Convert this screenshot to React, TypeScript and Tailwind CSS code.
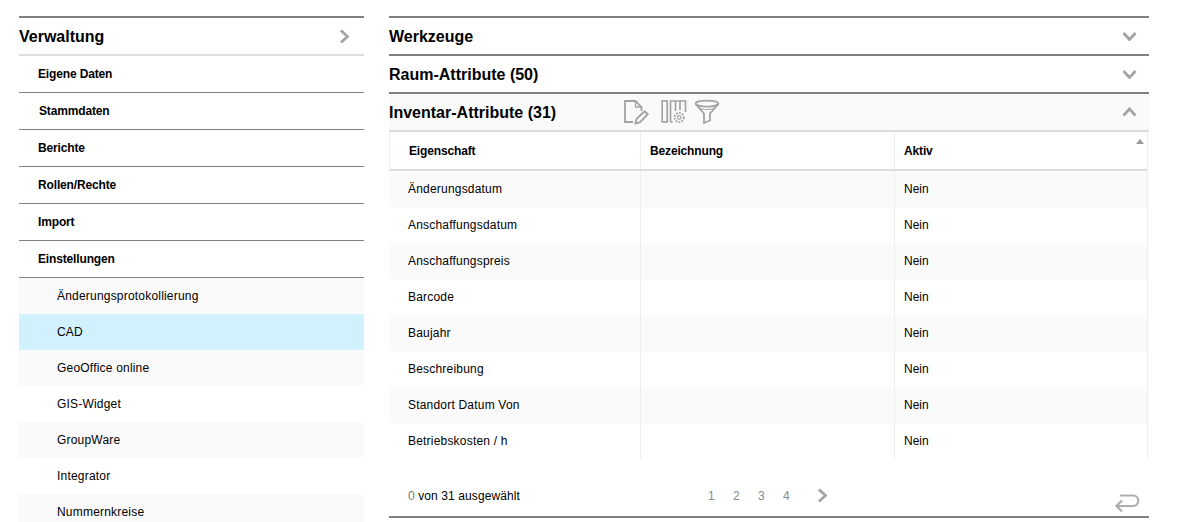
import React from "react";

const Chevron = ({ dir, className }: { dir: "right" | "down" | "up"; className?: string }) => {
  const d = dir === "right" ? "M2 1.5 L8.5 7.5 L2 13.5" : dir === "down" ? "M1.5 2 L7.5 8.5 L13.5 2" : "M1.5 8.5 L7.5 2 L13.5 8.5";
  const w = dir === "right" ? 10 : 15;
  const h = dir === "right" ? 15 : 10;
  return (
    <svg width={w} height={h} viewBox={`0 0 ${w} ${h}`} className={className} fill="none" stroke="#a3a3a3" strokeWidth="2.8">
      <path d={d} />
    </svg>
  );
};

const DocEdit = () => (
  <svg width="26" height="26" viewBox="0 0 26 26" fill="none" stroke="#a3a3a3" strokeWidth="1.8">
    <path d="M10 23 H2 V2 H12.5 L18.5 8 V12" />
    <path d="M12.5 2 V8 H18.5" strokeWidth="1.3" />
    <path d="M12.5 24.5 L13.5 20 L21.5 12.2 L24.8 15.2 L16.8 23.3 Z" strokeWidth="1.9" />
  </svg>
);

const ColumnsGear = () => (
  <svg width="26" height="26" viewBox="0 0 26 26" fill="none" stroke="#a3a3a3" strokeWidth="1.7">
    <rect x="1.2" y="2" width="5" height="21" />
    <path d="M9.5 23 V2 H14.5 V12" />
    <path d="M9.5 23 H11.5" />
    <path d="M14.5 2 H19 V11" />
    <path d="M19 2 H24.5 V13" />
    <circle cx="18.2" cy="18.5" r="1.8" strokeWidth="1.2" />
    <circle cx="18.2" cy="18.5" r="4.6" strokeDasharray="1.8 1.2" strokeWidth="1.8" />
  </svg>
);

const Funnel = () => (
  <svg width="26" height="26" viewBox="0 0 26 26" fill="none" stroke="#a3a3a3" strokeWidth="1.8">
    <ellipse cx="13" cy="4.6" rx="11.4" ry="3" />
    <path d="M1.6 5 L10 14.5 V24 L16 21.5 V14.5 L24.4 5" />
    <path d="M5 9 C9 11 17 11 21 9" strokeWidth="1" />
  </svg>
);

const ReturnArrow = () => (
  <svg width="26" height="20" viewBox="0 0 26 20" fill="none" stroke="#adadad" strokeWidth="2.2">
    <path d="M6 2.5 H19 C26 2.5 26 13 19 13 H3" />
    <path d="M8 7.5 L2.5 13 L8 18.5" />
  </svg>
);

const mainItems = ["Eigene Daten", "Stammdaten", "Berichte", "Rollen/Rechte", "Import", "Einstellungen"];
const subItems = ["Änderungsprotokollierung", "CAD", "GeoOffice online", "GIS-Widget", "GroupWare", "Integrator", "Nummernkreise"];
const rows = ["Änderungsdatum", "Anschaffungsdatum", "Anschaffungspreis", "Barcode", "Baujahr", "Beschreibung", "Standort Datum Von", "Betriebskosten / h"];

export default function App() {
  return (
    <div className="flex h-[522px] w-[1182px] gap-[25px] overflow-hidden bg-white pl-[19px] pt-[16px] font-['Liberation_Sans',Arial,sans-serif] text-black">
      <aside className="w-[345px] shrink-0">
        <div className="flex h-[40px] items-center justify-between border-t-2 border-b-2 border-t-[#808080] border-b-[#dddddd] pr-[15px]">
          <span className="mt-[1px] text-[16px] font-bold">Verwaltung</span>
          <Chevron dir="right" />
        </div>
        {mainItems.map((t) => (
          <div key={t} className={`flex h-[37px] items-center border-b border-[#808080] text-[12px] font-bold tracking-[-0.15px] ${t === "Stammdaten" ? "pl-[20px]" : "pl-[19px]"}`}>
            {t}
          </div>
        ))}
        {subItems.map((t, i) => (
          <div
            key={t}
            className={`flex h-[36px] items-center pl-[38px] text-[12px] tracking-[0.2px] ${t === "CAD" ? "bg-[#d2f1fe]" : i % 2 === 0 ? "bg-[#fafafa]" : "bg-white"}`}
          >
            {t}
          </div>
        ))}
      </aside>
      <main className="flex h-[502px] w-[760px] shrink-0 flex-col border-b-2 border-[#808080]">
        <div className="flex h-[38px] shrink-0 items-center justify-between border-t-2 border-[#808080] pr-[12px]">
          <span className="mt-[2px] text-[16px] font-bold">Werkzeuge</span>
          <Chevron dir="down" />
        </div>
        <div className="flex h-[38px] shrink-0 items-center justify-between border-t-2 border-[#808080] pr-[12px]">
          <span className="mt-[2px] text-[16px] font-bold">Raum-Attribute (50)</span>
          <Chevron dir="down" />
        </div>
        <div className="flex h-[40px] shrink-0 items-center border-t-2 border-b-2 border-t-[#808080] border-b-[#dddddd] bg-[#fafafa] pr-[12px]">
          <span className="mt-[2px] w-[234px] text-[16px] font-bold">Inventar-Attribute (31)</span>
          <div className="flex items-center gap-[12px]">
            <DocEdit />
            <ColumnsGear />
            <div className="-ml-[5px]">
              <Funnel />
            </div>
          </div>
          <Chevron dir="up" className="ml-auto" />
        </div>
        <div className="relative w-[759px] border-r border-[#eeeeee] text-[12px]">
          <span className="absolute right-[3px] top-[7px] h-0 w-0 border-x-[4px] border-b-[5px] border-x-transparent border-b-[#999999]" />
          <div className="grid h-[39px] grid-cols-[251px_254px_1fr] border-b-2 border-l border-b-[#dddddd] border-l-[#eeeeee] font-bold tracking-[-0.15px]">
            <div className="flex items-center border-r border-[#eeeeee] pl-[19px]">Eigenschaft</div>
            <div className="flex items-center border-r border-[#eeeeee] pl-[9px]">Bezeichnung</div>
            <div className="flex items-center pl-[9px]">Aktiv</div>
          </div>
          {rows.map((t, i) => (
            <div key={t} className={`grid h-[36px] grid-cols-[252px_254px_1fr] ${i % 2 === 0 ? "bg-[#fafafa]" : "bg-white"}`}>
              <div className="flex items-center border-r border-[#eeeeee] pl-[19px] tracking-[0.2px]">{t}</div>
              <div className="border-r border-[#eeeeee]" />
              <div className="flex items-center pl-[9px]">Nein</div>
            </div>
          ))}
        </div>
        <div className="flex flex-1 items-center pt-[16px] pl-[19px] text-[12px]">
          <span className="w-[300px] tracking-[0.1px]">
            <span className="text-[#777777]">0</span> von 31 ausgewählt
          </span>
          <div className="flex items-center text-[#888888]">
            <span className="w-[25px]">1</span>
            <span className="w-[25px]">2</span>
            <span className="w-[25px]">3</span>
            <span className="w-[34px]">4</span>
            <Chevron dir="right" />
          </div>
          <div className="ml-auto mr-[9px] mt-[14px]">
            <ReturnArrow />
          </div>
        </div>
      </main>
    </div>
  );
}
